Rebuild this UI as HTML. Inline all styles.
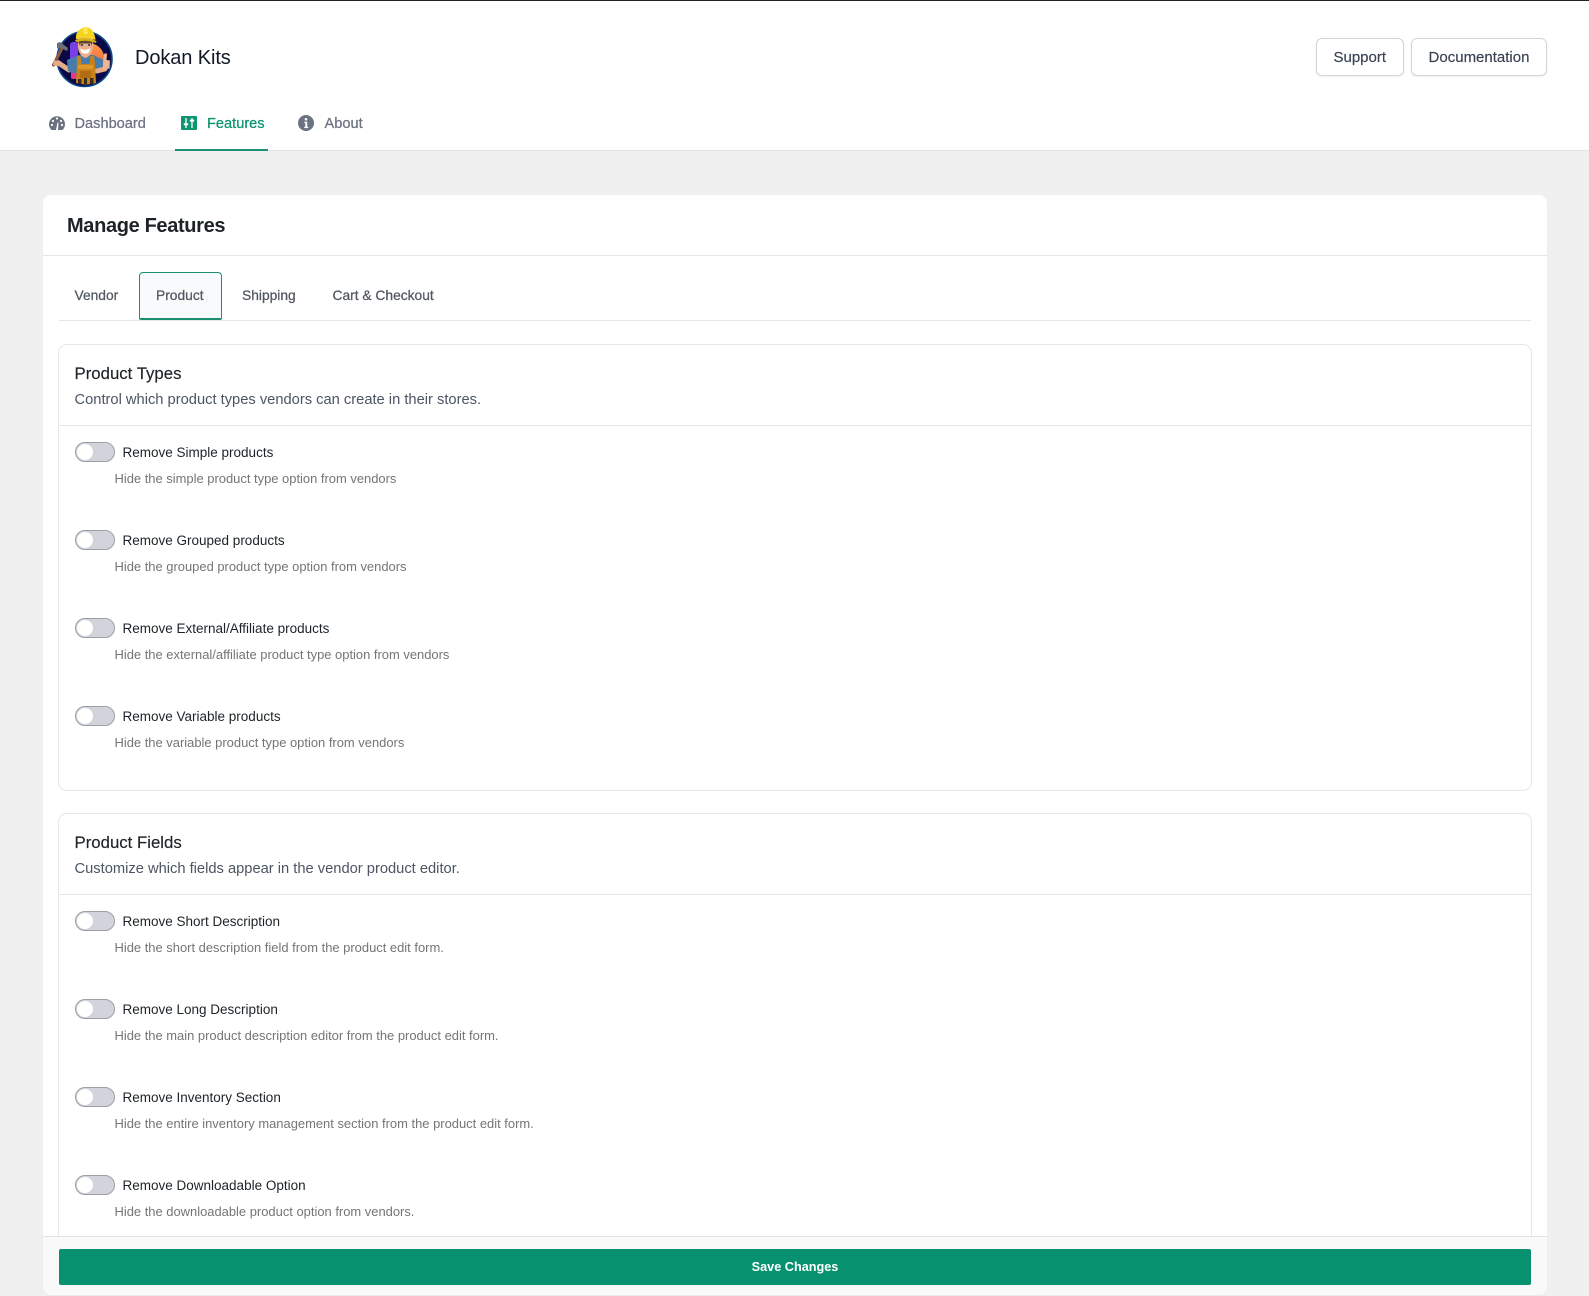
<!DOCTYPE html>
<html lang="en"><head><meta charset="utf-8"><title>Dokan Kits</title>
<style>
html,body{margin:0;padding:0;width:1589px;height:1296px;overflow:hidden;background:#f0f0f1;font-family:"Liberation Sans",sans-serif}
*{box-sizing:border-box}
.a{position:absolute}
.t{position:absolute;white-space:nowrap;line-height:20px;height:20px}
#top{position:absolute;left:0;top:0;width:1589px;height:151px;background:#fff;border-top:1px solid #1d2327;border-bottom:1px solid #e2e4e9}
.btn{position:absolute;top:38px;height:38px;background:#fff;border:1px solid #d1d5db;border-radius:6px;box-shadow:0 1px 2px rgba(0,0,0,.07);color:#374151;font-size:15px;line-height:38px;text-align:center;-webkit-text-stroke:.15px currentColor}
.nav{font-size:14.600px;color:#6b7280;-webkit-text-stroke:.25px currentColor}
#card{position:absolute;left:43px;top:195px;width:1504px;height:1100px;background:#fff;border-radius:8px;overflow:hidden;box-shadow:0 1px 2px rgba(0,0,0,.03)}
.sec{position:absolute;left:58px;width:1473.500px;border:1px solid #e6e6e6;border-radius:9px;background:#fff}
.ln{position:absolute;height:1px;background:#e6e6e6}
.h{font-size:16.800px;color:#1d2327;-webkit-text-stroke:.15px currentColor}
.d{font-size:14.700px;color:#4b5563}
.tg{position:absolute;left:75px;width:40px;height:20px;border-radius:10px;background:#d1d5db;border:1px solid #9d9fa5}
.tg:after{content:"";position:absolute;left:1px;top:1px;width:16px;height:16px;border-radius:50%;background:#fff}
.lb{font-size:13.500px;color:#1d2327;left:122.500px}
.ds{font-size:12.950px;color:#757575;left:114.500px}
.tab{font-size:13.800px;color:#50575e;-webkit-text-stroke:.25px currentColor}
</style></head><body>

<div id="top"></div>

<svg class="a" style="left:48px;top:22px" width="72" height="70" viewBox="48 22 72 70">
<defs><linearGradient id="g" x1="0" y1="0" x2="0" y2="1"><stop offset="0" stop-color="#ff9a4a"/><stop offset=".6" stop-color="#f4703f"/><stop offset="1" stop-color="#e8388c"/></linearGradient></defs>
<circle cx="84.500" cy="59" r="27.500" fill="#0a0845" stroke="#0b4a8c" stroke-width="1.600"/>
<rect x="70" y="42" width="8" height="22" rx="3" fill="#7a3fe4"/>
<rect x="71" y="66" width="6" height="13" rx="2" fill="#e8388c"/>
<path d="M88 43a16 16 0 0 1 6 31l-6-2z" fill="url(#g)"/>
<path d="M57 62l12 8" stroke="#e6ac8a" stroke-width="5" stroke-linecap="round"/>
<path d="M67 60l12-5h14l11 5 1 11-7 2-3-4H78l-2 5-8-3z" fill="#4a7cab"/>
<path d="M97 71l8-2" stroke="#e6ac8a" stroke-width="5" stroke-linecap="round"/>
<path d="M103 62l1-8q2-1.500 3 0l-.5 6 3.500 .5-.5 8-6.500 1z" fill="#eeb593"/>
<path d="M77 56h3.500l1 8h8l1-8h3.500l1 8 1 19q-10 3-20 0l1-19z" fill="#c98218"/>
<path d="M78 65h15v4H78z" fill="#dd9a2a"/>
<path d="M80 71h11v7H80z" fill="#b06d14"/>
<path d="M78 79h3.500v5H78zM84 78h3v6h-3zM90 78h3.500v6H90z" fill="#3a2c20"/>
<path d="M77.500 37h16l-.5 11q-1.500 8-7.500 10-6.500-2-7.500-10z" fill="#ecb08e"/>
<path d="M78.500 42l1.500-2h11l1.500 2-1 4-.5-2.500H80.500L80 46z" fill="#5f4430"/>
<path d="M80 48.500q5 3 10.500-.5l-1.500 4.500q-3.500 2.500-7.500 0z" fill="#fff"/>
<circle cx="82" cy="45" r="1.100" fill="#2f4a64"/><circle cx="89" cy="45" r="1.100" fill="#2f4a64"/>
<path d="M76 39q-1-9 9-12 9 0 10.500 13-9.500-4-19.500-1z" fill="#f5d41f"/>
<path d="M75 40q10-4 21.500 1l-.5 2q-10-4-20-1z" fill="#d9b410"/>
<path d="M83.500 27l3.500 0 1 7h-4.500z" fill="#ffe85a"/>
<path d="M53.500 65l9-18" stroke="#8a5a3a" stroke-width="3.200" stroke-linecap="round"/>
<path d="M57 43l3-1 8 6-1 3-6-3-4 .5z" fill="#6d6f78"/>
<path d="M54 60l4.500 1.500-1 5-4.500-1.500z" fill="#e6ac8a"/>
</svg>

<div class="t" style="left:135px;top:48px;font-size:20px;color:#101828;letter-spacing:-.1px">Dokan Kits</div>
<div class="btn" style="left:1316px;width:87.500px">Support</div>
<div class="btn" style="left:1411px;width:136px">Documentation</div>

<svg class="a" style="left:48px;top:114px" width="18" height="18" viewBox="48 114 18 18">
<path d="M51.500 130a8 8 0 1 1 11 0z" fill="#6b7280"/>
<circle cx="53" cy="121" r="1.100" fill="#fff"/><circle cx="57" cy="118.500" r="1.100" fill="#fff"/><circle cx="61" cy="121" r="1.100" fill="#fff"/><circle cx="62" cy="125" r="1.100" fill="#fff"/><circle cx="52" cy="125" r="1.100" fill="#fff"/>
<path d="M56 130l1.500-7.500 1 .2L58 130z" fill="#fff"/>
</svg>
<div class="t nav" style="left:74.500px;top:114px">Dashboard</div>

<svg class="a" style="left:181px;top:116px" width="16" height="14" viewBox="0 0 16 14">
<rect width="16" height="14" rx="1" fill="#0d9470"/>
<path d="M5 2v10M11 2v10" stroke="#fff" stroke-width="1.300"/>
<path d="M2.800 8.200h4.400M8.800 4.600h4.400" stroke="#fff" stroke-width="2"/>
</svg>
<div class="t nav" style="left:207px;top:114px;color:#0d9470">Features</div>
<div class="a" style="left:175px;top:149px;width:93px;height:2px;background:#1a9070"></div>

<svg class="a" style="left:298px;top:115px" width="16" height="16" viewBox="0 0 16 16">
<circle cx="8" cy="8" r="8" fill="#6b7280"/><circle cx="8" cy="4.300" r="1.300" fill="#fff"/><path d="M6.300 6.800h2.900v5h1v1.300H6.300v-1.300h1v-3.700h-1z" fill="#fff"/>
</svg>
<div class="t nav" style="left:324.500px;top:114px">About</div>

<div id="card"></div>
<div class="t" style="left:67px;top:216px;font-size:20px;font-weight:700;color:#1d2327;letter-spacing:-.35px">Manage Features</div>
<div class="ln" style="left:43px;top:255px;width:1504px"></div>

<div class="ln" style="left:59px;top:320px;width:1472px"></div>
<div class="a" style="left:139px;top:272px;width:83px;height:48px;background:#f8fafc;border:1px solid #1a9070;border-bottom:2px solid #1a9070;border-radius:4px 4px 2px 2px"></div>
<div class="t tab" style="left:74.500px;top:286px">Vendor</div>
<div class="t tab" style="left:156px;top:286px">Product</div>
<div class="t tab" style="left:242px;top:286px">Shipping</div>
<div class="t tab" style="left:332.500px;top:286px">Cart &amp; Checkout</div>

<div class="sec" style="top:344px;height:447px"></div>
<div class="ln" style="left:59px;top:425px;width:1472px"></div>
<div class="t h" style="left:74.500px;top:364px">Product Types</div>
<div class="t d" style="left:74.500px;top:390px">Control which product types vendors can create in their stores.</div>

<div class="tg" style="top:442px"></div><div class="t lb" style="top:443px">Remove Simple products</div><div class="t ds" style="top:469px">Hide the simple product type option from vendors</div>
<div class="tg" style="top:530px"></div><div class="t lb" style="top:531px">Remove Grouped products</div><div class="t ds" style="top:557px">Hide the grouped product type option from vendors</div>
<div class="tg" style="top:618px"></div><div class="t lb" style="top:619px">Remove External/Affiliate products</div><div class="t ds" style="top:645px">Hide the external/affiliate product type option from vendors</div>
<div class="tg" style="top:706px"></div><div class="t lb" style="top:707px">Remove Variable products</div><div class="t ds" style="top:733px">Hide the variable product type option from vendors</div>

<div class="sec" style="top:813px;height:440px"></div>
<div class="ln" style="left:59px;top:894px;width:1472px"></div>
<div class="t h" style="left:74.500px;top:833px">Product Fields</div>
<div class="t d" style="left:74.500px;top:859px">Customize which fields appear in the vendor product editor.</div>

<div class="tg" style="top:911px"></div><div class="t lb" style="top:912px">Remove Short Description</div><div class="t ds" style="top:938px">Hide the short description field from the product edit form.</div>
<div class="tg" style="top:999px"></div><div class="t lb" style="top:1000px">Remove Long Description</div><div class="t ds" style="top:1026px">Hide the main product description editor from the product edit form.</div>
<div class="tg" style="top:1087px"></div><div class="t lb" style="top:1088px">Remove Inventory Section</div><div class="t ds" style="top:1114px">Hide the entire inventory management section from the product edit form.</div>
<div class="tg" style="top:1175px"></div><div class="t lb" style="top:1176px">Remove Downloadable Option</div><div class="t ds" style="top:1202px">Hide the downloadable product option from vendors.</div>

<div class="a" style="left:43px;top:1236px;width:1504px;height:59px;background:#f9f9f9;border-top:1px solid #e3e3e3;border-radius:0 0 8px 8px"></div>
<div class="a" style="left:59px;top:1249px;width:1472px;height:36px;background:#08916f;border-radius:2px;color:#fff;font-size:12.700px;font-weight:700;line-height:36px;text-align:center">Save Changes</div>

</body></html>
